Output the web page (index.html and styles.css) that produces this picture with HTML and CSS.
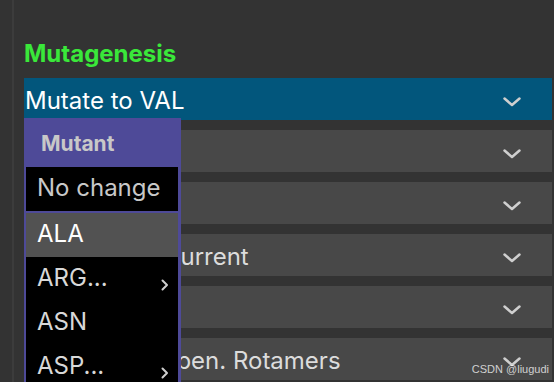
FILE: index.html
```html
<!DOCTYPE html>
<html lang="en">
<head>
  <meta charset="UTF-8">
  <title>Mutagenesis</title>
  <link rel="stylesheet" href="styles.css">
</head>
<body>
  <div class="screen">
    <div class="gutter"></div>

    <!-- Wizard panel -->
    <div class="panel">
      <h1 class="title">Mutagenesis</h1>

      <div class="rows">
        <div class="row active">
          <span>Mutate to VAL</span>
          <svg class="chev" width="18" height="10" viewBox="0 0 18 10"><polyline points="1.5,1.5 9,8 16.5,1.5"/></svg>
        </div>
        <div class="row">
          <span></span>
          <svg class="chev" width="18" height="10" viewBox="0 0 18 10"><polyline points="1.5,1.5 9,8 16.5,1.5"/></svg>
        </div>
        <div class="row">
          <span></span>
          <svg class="chev" width="18" height="10" viewBox="0 0 18 10"><polyline points="1.5,1.5 9,8 16.5,1.5"/></svg>
        </div>
        <div class="row">
          <span>Hydrogens: Current</span>
          <svg class="chev" width="18" height="10" viewBox="0 0 18 10"><polyline points="1.5,1.5 9,8 16.5,1.5"/></svg>
        </div>
        <div class="row">
          <span></span>
          <svg class="chev" width="18" height="10" viewBox="0 0 18 10"><polyline points="1.5,1.5 9,8 16.5,1.5"/></svg>
        </div>
        <div class="row">
          <span>Backbone Depen. Rotamers</span>
          <svg class="chev" width="18" height="10" viewBox="0 0 18 10"><polyline points="1.5,1.5 9,8 16.5,1.5"/></svg>
        </div>
      </div>

      <!-- Open popup menu -->
      <div class="menu">
        <div class="menu-head">Mutant</div>
        <div class="item current">No change</div>
        <div class="item hover">ALA</div>
        <div class="item">ARG...
          <svg class="sub" width="8" height="12" viewBox="0 0 8 12"><polyline points="1.5,1.5 6,6 1.5,10.5"/></svg>
        </div>
        <div class="item">ASN</div>
        <div class="item">ASP...
          <svg class="sub" width="8" height="12" viewBox="0 0 8 12"><polyline points="1.5,1.5 6,6 1.5,10.5"/></svg>
        </div>
      </div>
    </div>

    <div class="watermark">CSDN @liugudi</div>
  </div>
</body>
</html>
```

FILE: styles.css
```css
body {
  margin: 0;
  background-color: #333333;
  font-family: Inter, "Liberation Sans", sans-serif;
  overflow: hidden;
}

.screen {
  position: relative;
  display: flex;
  height: 382px;
  overflow: hidden;
}

.gutter {
  width: 2px;
  margin-left: 12px;
  background-color: #3c3c3c;
}

.panel {
  position: relative;
  flex: 1;
  margin: 0 2px 0 10px;
}

.title {
  margin: 0;
  padding-top: 39px;
  height: 39px;
  font-size: 24px;
  line-height: 29px;
  font-weight: bold;
  color: #3ae83a;
}

.rows {
  display: flex;
  flex-direction: column;
  gap: 10px;
}

.row {
  display: flex;
  align-items: center;
  justify-content: space-between;
  height: 42px;
  padding: 0 31px 0 1px;
  background-color: #484848;
  color: #dcdcdc;
  font-size: 24px;
  white-space: nowrap;
}

.row.active {
  background-color: #02567c;
  color: #fff;
}

.row span {
  padding-top: 3px;
}

.chev {
  margin-top: 6px;
  flex-shrink: 0;
}

.chev polyline,
.sub polyline {
  fill: none;
  stroke: #cfcfcf;
  stroke-width: 2.5;
  stroke-linecap: round;
  stroke-linejoin: round;
}

/* Popup over the rows */
.menu {
  position: absolute;
  left: 0;
  top: 118px;
  width: 152px;
  border: solid #4e4a98;
  border-width: 0 3px 0 2px;
  background-color: #000;
}

.menu-head {
  height: 49px;
  padding-left: 15px;
  line-height: 51px;
  background-color: #4e4a98;
  font-size: 21px;
  font-weight: bold;
  color: #c8c8c8;
}

.item {
  display: flex;
  align-items: center;
  justify-content: space-between;
  height: 41px;
  padding: 0 9px 3px 11px;
  font-size: 24px;
  color: #d8d8d8;
}

.item.current {
  color: #c8c8c8;
  border-bottom: 2px solid #4e4a98;
}

.item.hover {
  background-color: #525252;
  color: #fff;
}

.sub {
  margin-top: 14px;
}

.sub polyline {
  stroke-width: 2;
}

.watermark {
  position: absolute;
  right: 5px;
  bottom: 7px;
  font-family: "Liberation Sans", sans-serif;
  font-size: 11px;
  color: rgba(255, 255, 255, 0.75);
}
```
